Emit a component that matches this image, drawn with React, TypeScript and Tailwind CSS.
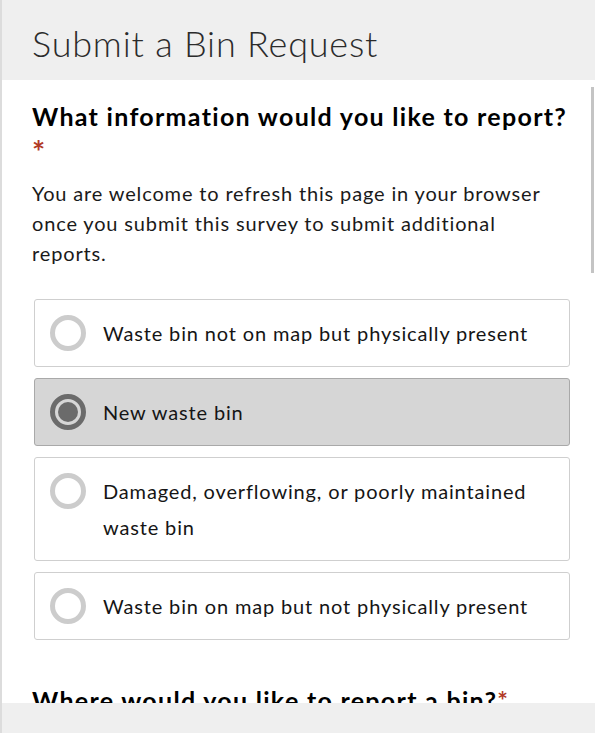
import React from 'react';

const OPTIONS = [
  { label: 'Waste bin not on map but physically present', selected: false },
  { label: 'New waste bin', selected: true },
  { label: 'Damaged, overflowing, or poorly maintained waste bin', selected: false },
  { label: 'Waste bin on map but not physically present', selected: false },
];

function Radio({ selected }: { selected: boolean }) {
  if (selected) {
    return (
      <span className="flex h-[36px] w-[36px] shrink-0 items-center justify-center rounded-full border-[5px] border-[#6b6b6b]">
        <span className="h-[20px] w-[20px] rounded-full bg-[#6b6b6b]" />
      </span>
    );
  }
  return <span className="h-[36px] w-[36px] shrink-0 rounded-full border-[5px] border-[#cccccc]" />;
}

export default function App() {
  return (
    <div className="flex h-[733px] w-[595px] flex-col overflow-hidden border-l-2 border-[#dcdcdc] bg-white font-['Lato',sans-serif] text-[#151515]">
      <header className="h-[80px] shrink-0 bg-[#efefef] pl-[30px] pt-[23px]">
        <h1 className="text-[36px] font-light leading-[40px] tracking-[0.8px] text-[#2b2b2b]">Submit a Bin Request</h1>
      </header>

      <main className="relative flex-1 overflow-hidden">
        <div className="absolute right-[1px] top-[7px] h-[186px] w-[3px] bg-[#c4c4c4]" />
        <div className="pl-[30px] pt-[19px]">
          <h2 className="text-[25px] font-bold leading-[34px] tracking-[1.3px] text-black">
            What information would you like to report?
            <span className="block pt-[2px] text-[31px] leading-[32px] text-[#b23a26]">*</span>
          </h2>
          <p className="mt-[11px] w-[530px] text-[20px] leading-[30px] tracking-[0.85px] text-[#1a1a1a]">
            You are welcome to refresh this page in your browser once you submit this survey to submit additional reports.
          </p>

          <div className="mt-[31px] ml-[2px] flex w-[536px] flex-col gap-[11px]">
            {OPTIONS.map((o) => (
              <div
                key={o.label}
                className={
                  o.selected
                    ? 'flex items-start gap-[17px] rounded-[3px] border border-[#a9a9a9] bg-[#d6d6d6] px-[15px] py-[15px]'
                    : 'flex items-start gap-[17px] rounded-[3px] border border-[#cfcfcf] bg-white px-[15px] py-[15px]'
                }
              >
                <Radio selected={o.selected} />
                <span className="pr-[10px] text-[20px] leading-[36px] tracking-[0.85px]">{o.label}</span>
              </div>
            ))}
          </div>

          <h2 className="mt-[43px] text-[25px] font-bold leading-[34px] tracking-[1.3px] text-black">
            Where would you like to report a bin?<span className="text-[#b23a26]">*</span>
          </h2>
        </div>
      </main>

      <footer className="h-[30px] shrink-0 bg-[#efefef]" />
    </div>
  );
}
